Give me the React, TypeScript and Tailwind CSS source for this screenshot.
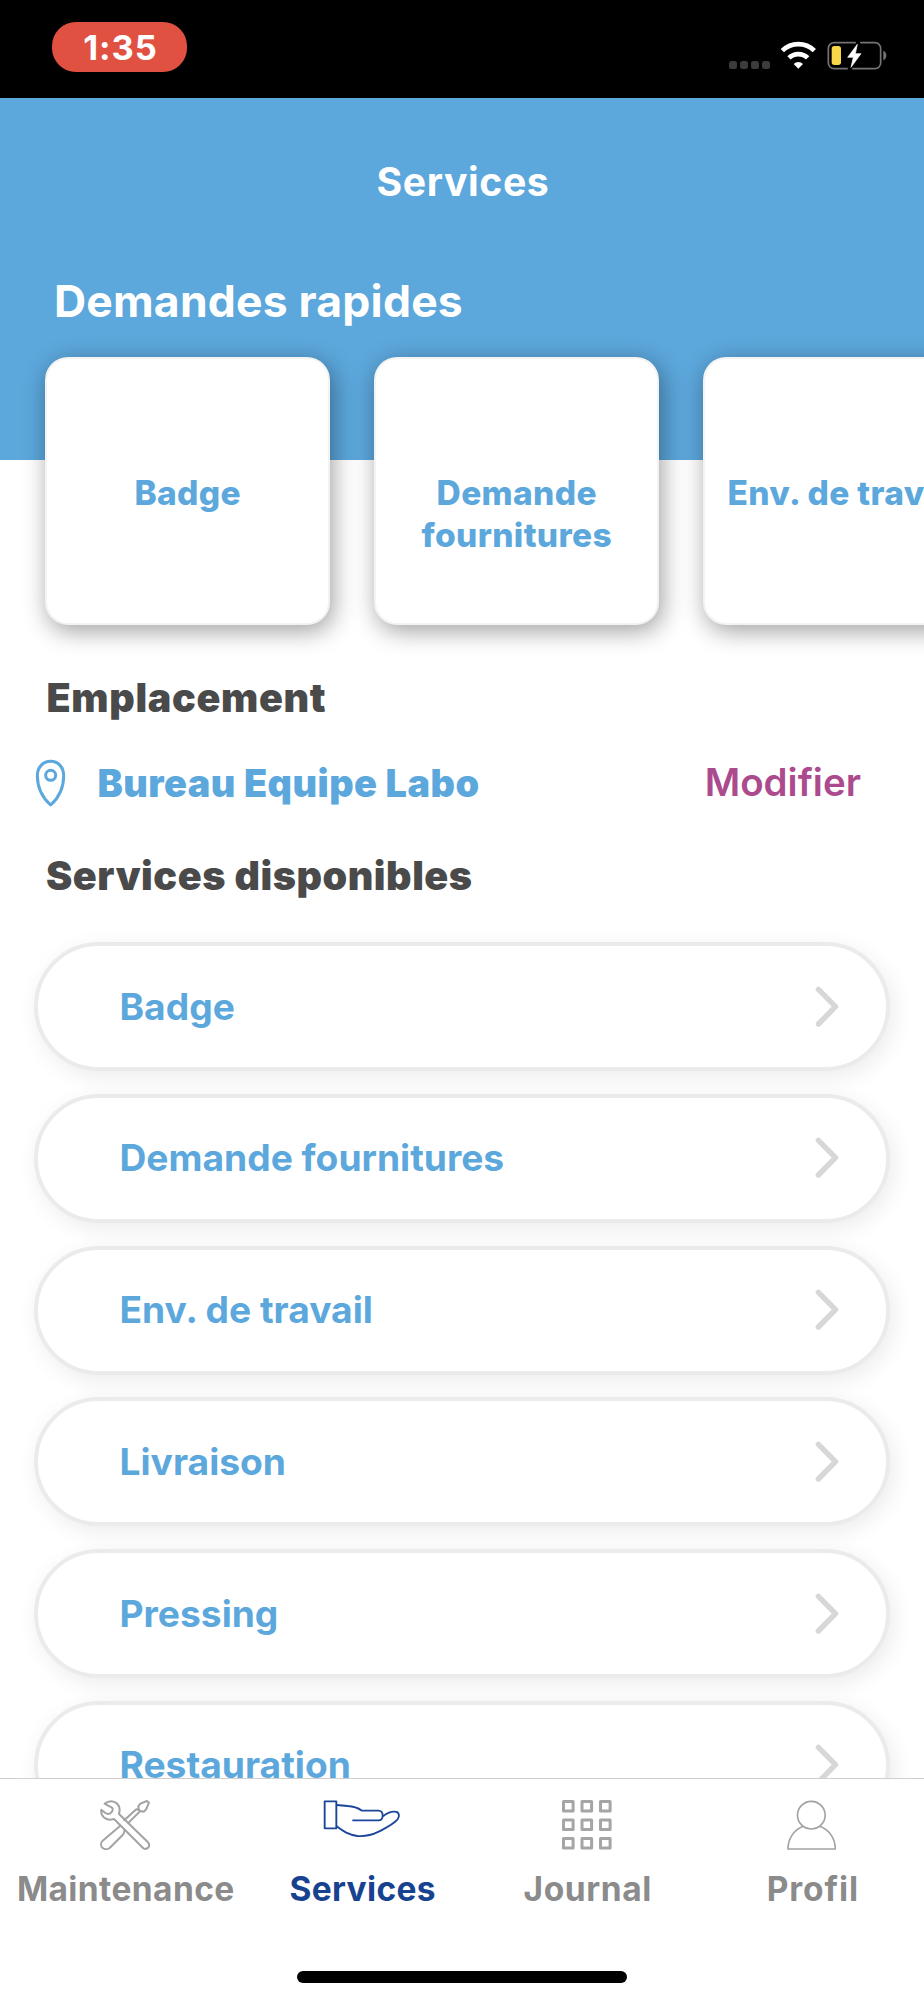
import type { ReactNode } from 'react';

const quickRequests = ['Badge', 'Demande fournitures', 'Env. de travail'];

const services = ['Badge', 'Demande fournitures', 'Env. de travail', 'Livraison', 'Pressing', 'Restauration'];

function WifiIcon() {
  return (
    <svg viewBox="240 63 112 86" className="h-[28.67px] w-[37.33px]" fill="none" stroke="#fff" strokeWidth="14">
      <path d="M247 92A68 68 0 0 1 343 92" />
      <path d="M267 114A39 39 0 0 1 323 114" />
      <path d="M295 146L281 132A20 20 0 0 1 309 132Z" fill="#fff" stroke="none" />
    </svg>
  );
}

function BatteryIcon() {
  const bolt = 'M471 73L442 112H459L452 142L482 101H465Z';
  return (
    <svg viewBox="380 63 180 86" className="h-[28.67px] w-[60px]" fill="none">
      <rect x="384" y="68" width="157" height="78" rx="17" stroke="#747474" strokeWidth="5" />
      <rect x="394" y="78" width="28" height="57" rx="8" fill="#f8d749" />
      <path d="M473 62V78M449 136V150" stroke="#000" strokeWidth="13" />
      <path d={bolt} stroke="#fff" strokeWidth="2" fill="#fff" />
      <path d="M549 92Q558 96 558 106.5Q558 117 549 121Z" fill="#747474" />
    </svg>
  );
}

function StatusBar() {
  return (
    <div className="flex h-[98px] shrink-0 items-start justify-between bg-black pr-[37.3px] pl-[52px]">
      <div className="mt-[22px] flex h-[49.5px] w-[135px] items-center justify-center rounded-[24px] bg-[#e15142] pt-[2px] pl-[2px] text-[34.5px] leading-none font-bold tracking-[1px] text-white">
        1:35
      </div>
      <div className="mt-[41px] flex items-end">
        <div className="mr-[10px] mb-[1px] flex gap-[3px]">
          {[0, 1, 2, 3].map((dot) => (
            <span key={dot} className="size-[8px] rounded-[2.5px] bg-[#3c3c3c]" />
          ))}
        </div>
        <WifiIcon />
        <span className="w-[9.3px]" />
        <BatteryIcon />
      </div>
    </div>
  );
}

function QuickCard({ label }: { label: string }) {
  return (
    <div className="flex h-[268px] w-[284.5px] shrink-0 justify-center rounded-[23px] border-2 border-[#f3f3f3] bg-white pt-[112.6px] pl-[1px] text-center text-[33.5px] leading-[42.5px] font-extrabold tracking-[0.35px] text-[#5ca8dd] shadow-[3px_6px_24px_rgba(0,0,0,0.38)]">
      {label}
    </div>
  );
}

function PinIcon() {
  return (
    <svg viewBox="105 294 93 147" className="h-[49px] w-[31px]" fill="none" stroke="#5ca8dd" strokeWidth="9">
      <path d="M152 301C129 301 112 319 112 344C112 383 131 413 152 432C173 413 191 383 191 344C191 319 175 301 152 301Z" strokeLinejoin="round" />
      <circle cx="152" cy="343" r="15" />
    </svg>
  );
}

function Chevron() {
  return (
    <svg viewBox="0 0 24 42" className="h-[42px] w-[24px]" fill="none" stroke="#d5d7d9" strokeWidth="5.4" strokeLinecap="round" strokeLinejoin="round">
      <path d="M3.4 3.4L20.5 20.7L3.4 38" />
    </svg>
  );
}

function ServiceRow({ label }: { label: string }) {
  return (
    <div className="flex h-[129px] shrink-0 items-center justify-between rounded-full border-4 border-[#ebebeb] bg-white pr-[47.5px] pl-[81.5px] shadow-[4px_6px_22px_rgba(0,0,0,0.08)]">
      <span className="text-[37.2px] leading-[44px] font-bold text-[#5ca8dd]">{label}</span>
      <Chevron />
    </div>
  );
}

function ToolsIcon() {
  return (
    <svg viewBox="300 359 151 151" className="size-[50.3px]" fill="none" stroke="#a3a3a3" strokeWidth="6" strokeLinejoin="round">
      <path d="M314 370C325 362 338 361 347 367C358 374 361 387 357 401L444 486C453 497 443 510 430 504L342 416C330 420 319 418 311 411C304 404 302 397 304 388L316 398C321 401 326 402 331 399C337 394 340 387 336 382C330 377 322 376 314 370Z" />
      <path d="M371 421L409 387L417 389L415 378L421 370L441 362L447 367L439 386L432 394L421 392L383 430" />
      <path d="M361 436L308 481C302 487 302 496 306 501C312 508 322 508 329 503L368 464C373 459 374 455 373 448" />
    </svg>
  );
}

function HandIcon() {
  return (
    <svg viewBox="972 359 231 114" className="h-[38px] w-[77px] overflow-visible" fill="none" stroke="#1b459a" strokeWidth="5.6" strokeLinejoin="round">
      <path d="M974 363H1009V444H974Z" />
      <path d="M1010 374L1043 377C1064 378 1076 384 1086 391H1136C1152 391 1152 420 1136 420H1057" />
      <path d="M1149 408C1162 397 1177 393 1186 394C1198 395 1200 408 1192 418C1176 435 1155 444 1136 454C1112 466 1096 469 1072 467C1045 463 1031 454 1010 438" />
    </svg>
  );
}

function GridIcon() {
  const steps = [0, 18.5, 37];
  return (
    <svg viewBox="0 0 50 50" className="size-[50px]" fill="none" stroke="#a5a5a5" strokeWidth="3" strokeLinejoin="round">
      {steps.map((y) => steps.map((x) => <rect key={`${x}-${y}`} x={x + 1.5} y={y + 1.5} width="9.6" height="9.6" />))}
    </svg>
  );
}

function ProfileIcon() {
  return (
    <svg viewBox="975 359 151 151" className="size-[50.3px] overflow-visible" fill="none" stroke="#a3a3a3" strokeWidth="5" strokeLinejoin="round">
      <circle cx="1048" cy="404.5" r="41.5" />
      <path d="M1023 438C997 449 978 473 978 506H1120C1120 473 1101 449 1074 438" />
    </svg>
  );
}

function Tab({ icon, label, className }: { icon: ReactNode; label: string; className: string }) {
  return (
    <div className={`flex flex-col items-center pt-[21px] text-[33.5px] leading-[40px] font-bold ${className}`}>
      <div className="h-[50px]">{icon}</div>
      <span className="mt-[19px] pl-[1.5px]">{label}</span>
    </div>
  );
}

export default function App() {
  return (
    <div className="flex h-[2000px] w-[924px] flex-col overflow-hidden bg-white font-[Inter,sans-serif]">
      <StatusBar />
      <main className="flex min-h-0 flex-1 flex-col overflow-hidden">
        <header className="h-[362px] shrink-0 bg-[#5ca7dc] text-white">
          <h1 className="pt-[60px] pl-[2px] text-center text-[39.2px] leading-[48px] font-bold tracking-[0.6px]">Services</h1>
          <h2 className="mt-[67px] pl-[54px] text-[44.5px] leading-[56px] font-bold tracking-[0.2px]">Demandes rapides</h2>
        </header>

        <div className="-mt-[103px] flex shrink-0 gap-[44.5px] pl-[45px]">
          {quickRequests.map((label) => (
            <QuickCard key={label} label={label} />
          ))}
        </div>

        <h2 className="mt-[50px] shrink-0 pl-[46.5px] text-[39.5px] leading-[46px] font-black tracking-[0.65px] text-[#4a4a4a]">
          Emplacement
        </h2>
        <div className="mt-[38px] flex h-[48px] shrink-0 items-center pr-[63px] pl-[35px]">
          <PinIcon />
          <span className="ml-[31.5px] flex-1 text-[37.8px] font-black tracking-[0.5px] text-[#5ca8dd]">Bureau Equipe Labo</span>
          <span className="text-[38.5px] font-semibold text-[#ab4a8d]">Modifier</span>
        </div>
        <h2 className="mt-[46px] shrink-0 pl-[46px] text-[39.5px] leading-[46px] font-black tracking-[0.54px] text-[#4a4a4a]">
          Services disponibles
        </h2>

        <div className="mt-[43px] flex flex-col gap-[22.8px] px-[34px]">
          {services.map((label) => (
            <ServiceRow key={label} label={label} />
          ))}
        </div>
      </main>

      <footer className="flex h-[222px] shrink-0 flex-col items-center border-t border-[#cfcfcf] bg-white">
        <nav className="grid w-full grid-cols-[250px_224px_226px_224px] text-[#8b8b8b]">
          <Tab icon={<ToolsIcon />} label="Maintenance" className="tracking-[0.4px]" />
          <Tab icon={<HandIcon />} label="Services" className="tracking-[0.35px] text-[#17428f]" />
          <Tab icon={<GridIcon />} label="Journal" className="tracking-[0.6px]" />
          <Tab icon={<ProfileIcon />} label="Profil" className="tracking-[0.9px]" />
        </nav>
        <div className="mt-[61.5px] h-[12px] w-[330px] rounded-full bg-black" />
      </footer>
    </div>
  );
}
